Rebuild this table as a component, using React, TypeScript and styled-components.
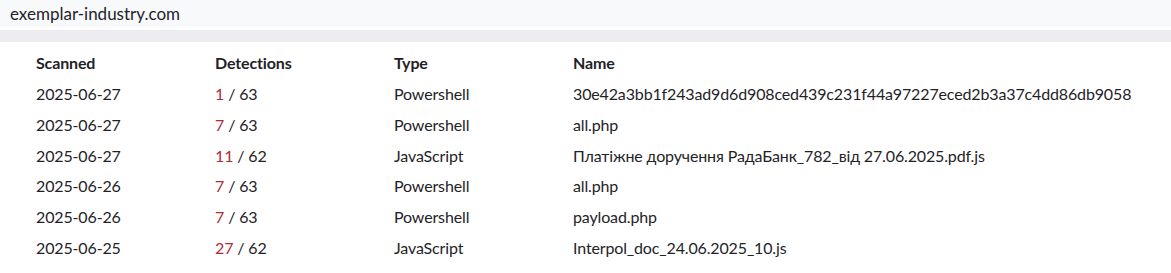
import styled, { createGlobalStyle } from "styled-components";

const GlobalStyle = createGlobalStyle`
  body {
    margin: 0;
    background: #ffffff;
    font-family: "Source Sans Pro", Lato, "Liberation Sans", sans-serif;
    color: #212529;
  }
`;

interface Scan {
  scanned: string;
  detections: number;
  engines: number;
  type: string;
  name: string;
}

const scans: Scan[] = [
  { scanned: "2025-06-27", detections: 1, engines: 63, type: "Powershell", name: "30e42a3bb1f243ad9d6d908ced439c231f44a97227eced2b3a37c4dd86db9058" },
  { scanned: "2025-06-27", detections: 7, engines: 63, type: "Powershell", name: "all.php" },
  { scanned: "2025-06-27", detections: 11, engines: 62, type: "JavaScript", name: "Платіжне доручення РадаБанк_782_від 27.06.2025.pdf.js" },
  { scanned: "2025-06-26", detections: 7, engines: 63, type: "Powershell", name: "all.php" },
  { scanned: "2025-06-26", detections: 7, engines: 63, type: "Powershell", name: "payload.php" },
  { scanned: "2025-06-25", detections: 27, engines: 62, type: "JavaScript", name: "Interpol_doc_24.06.2025_10.js" },
];

const TopBar = styled.div`
  height: 27px;
  padding-left: 10px;
  display: flex;
  align-items: center;
  background: #f8f9fb;
  border-bottom: 3px solid #ffffff;
  font-size: 17px;
  color: #1f2328;
`;

const Band = styled.div`
  height: 12px;
  background: #ececf1;
`;

const Table = styled.table`
  margin: 5px 0 0 36px;
  border-collapse: collapse;
  font-size: 16px;
  letter-spacing: -0.14px;
  color: #1f2328;
`;

const HeadCell = styled.th`
  text-align: left;
  font-weight: 700;
  padding: 4px 0;
  line-height: 24px;
  width: 179px;
  &:last-child {
    width: auto;
  }
`;

const Cell = styled.td`
  padding: 3px 0;
  line-height: 24.8px;
  white-space: nowrap;
`;

const Hits = styled.span`
  color: #b02a37;
  margin-right: 4px;
`;

export default function App() {
  return (
    <>
      <GlobalStyle />
      <TopBar>exemplar-industry.com</TopBar>
      <Band />
      <Table>
        <thead>
          <tr>
            <HeadCell>Scanned</HeadCell>
            <HeadCell>Detections</HeadCell>
            <HeadCell>Type</HeadCell>
            <HeadCell>Name</HeadCell>
          </tr>
        </thead>
        <tbody>
          {scans.map((s, i) => (
            <tr key={i}>
              <Cell>{s.scanned}</Cell>
              <Cell>
                <Hits>{s.detections}</Hits>/ {s.engines}
              </Cell>
              <Cell>{s.type}</Cell>
              <Cell>{s.name}</Cell>
            </tr>
          ))}
        </tbody>
      </Table>
    </>
  );
}
